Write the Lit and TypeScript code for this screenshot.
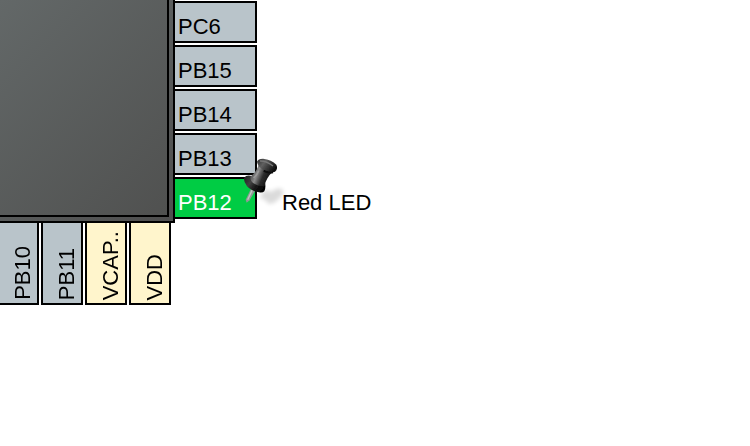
import { LitElement, html, css, svg } from "lit";
import { customElement } from "lit/decorators.js";
import { classMap } from "lit/directives/class-map.js";

type Kind = "io" | "power" | "active";

interface Pin {
  name: string;
  kind: Kind;
  label?: string;
}

const RIGHT_PINS: Pin[] = [
  { name: "PC6", kind: "io" },
  { name: "PB15", kind: "io" },
  { name: "PB14", kind: "io" },
  { name: "PB13", kind: "io" },
  { name: "PB12", kind: "active", label: "Red LED" },
];

const BOTTOM_PINS: Pin[] = [
  { name: "PB10", kind: "io" },
  { name: "PB11", kind: "io" },
  { name: "VCAP..", kind: "power" },
  { name: "VDD", kind: "power" },
];

@customElement("push-pin")
export class PushPin extends LitElement {
  static styles = css`
    :host {
      display: block;
      pointer-events: none;
    }
    svg {
      display: block;
      width: 50px;
      height: 60px;
      overflow: visible;
    }
  `;

  render() {
    return html`${svg`
      <svg viewBox="0 0 150 180" aria-hidden="true">
        <defs>
          <linearGradient id="cap" x1="0" y1="0" x2="1" y2="0.5">
            <stop offset="0" stop-color="#2a2a2a" />
            <stop offset="0.4" stop-color="#606060" />
            <stop offset="0.75" stop-color="#303030" />
            <stop offset="1" stop-color="#111" />
          </linearGradient>
          <linearGradient id="neck" x1="0" y1="0.2" x2="1" y2="0.6">
            <stop offset="0" stop-color="#333" />
            <stop offset="0.35" stop-color="#8a8a8a" />
            <stop offset="0.6" stop-color="#2c2c2c" />
            <stop offset="1" stop-color="#080808" />
          </linearGradient>
          <linearGradient id="collar" x1="0" y1="0" x2="1" y2="0.6">
            <stop offset="0" stop-color="#1c1c1c" />
            <stop offset="0.4" stop-color="#424242" />
            <stop offset="0.7" stop-color="#161616" />
            <stop offset="1" stop-color="#050505" />
          </linearGradient>
          <filter id="soft" x="-20%" y="-20%" width="140%" height="140%">
            <feGaussianBlur stdDeviation="2" />
          </filter>
          <filter id="haze" x="-30%" y="-30%" width="160%" height="160%">
            <feGaussianBlur stdDeviation="6" />
          </filter>
        </defs>
        <path d="M74 144 L86 122 Q98 118 110 126 Q124 110 142 118 Q150 132 134 144 Q116 164 100 161 Q94 148 74 144Z"
          fill="#000" opacity="0.14" filter="url(#haze)" />
        <g filter="url(#soft)">
          <path d="M49 114 L63 118 L44 151 L35 158 L32 149Z" fill="#8f9994" />
          <path d="M52 119 L38 149" stroke="#c0c8c3" stroke-width="4" />
          <path d="M27 84 Q34 74 50 78 L89 94 Q94 112 88 124 Q83 129 72 127 Q50 124 36 109 Q26 96 27 84Z" fill="url(#collar)" />
          <path d="M71 42 Q68 62 46 80 Q45 94 58 101 Q72 110 89 107 Q92 86 114 64Z" fill="url(#neck)" />
          <path d="M66 35 Q69 26 84 26 Q110 29 124 44 Q130 56 120 65 Q107 70 91 62 Q68 52 66 35Z" fill="url(#cap)" />
          <path d="M75 33 Q94 32 114 48" fill="none" stroke="#777" stroke-width="4" />
          <path d="M86 62 Q100 70 114 67" fill="none" stroke="#080808" stroke-width="5" />
          <path d="M71 62 Q67 73 56 84" fill="none" stroke="#999" stroke-width="5" />
        </g>
      </svg>
    `}`;
  }
}

@customElement("chip-pin")
export class ChipPin extends LitElement {
  static properties = {
    name: {},
    kind: {},
    vertical: { type: Boolean },
  };

  declare name: string;
  declare kind: Kind;
  declare vertical: boolean;

  static styles = css`
    :host {
      display: block;
      flex: none;
    }
    .pin {
      box-sizing: border-box;
      display: flex;
      align-items: flex-end;
      width: 82px;
      height: 42px;
      margin: 0;
      padding: 0 0 0 3px;
      border: 2px solid #000;
      border-left: 0;
      border-radius: 0;
      color: #000;
      font: 22px/28px "Liberation Sans", Arial, sans-serif;
      white-space: nowrap;
    }
    .vertical {
      justify-content: flex-end;
      width: 42px;
      height: 82px;
      padding: 0 0 3px;
      border: 2px solid #000;
      border-top: 0;
    }
    .vertical .text {
      writing-mode: vertical-rl;
      transform: rotate(180deg);
    }
    .io {
      background: #b9c4ca;
    }
    .power {
      background: #fff5cc;
    }
    .active {
      background: #00cc44;
      color: #fff;
    }
  `;

  render() {
    const classes = {
      pin: true,
      vertical: this.vertical,
      [this.kind]: true,
    };
    return html`<button class=${classMap(classes)}><span class="text">${this.name}</span></button>`;
  }
}

@customElement("app-root")
export class AppRoot extends LitElement {
  static styles = css`
    :host {
      display: block;
      min-height: 100vh;
      overflow: hidden;
      background: #fff;
      color: #000;
      font: 22px/28px "Liberation Sans", Arial, sans-serif;
    }
    .board {
      display: grid;
      grid-template-columns: 175px 1fr;
    }
    .chip {
      display: flex;
      padding: 0 4px 4px 0;
      border: solid #000;
      border-width: 0 2px 2px 0;
      background: linear-gradient(135deg, #646a6a, #4f4f4f);
    }
    .die {
      flex: 1;
      border: solid #000;
      border-width: 0 2px 2px 0;
      background: linear-gradient(135deg, #636868, #505150);
    }
    .right {
      display: flex;
      flex-direction: column;
      gap: 2px;
      padding: 1px 0 4px;
    }
    .row {
      position: relative;
      display: flex;
      align-items: flex-end;
      gap: 25px;
    }
    .label {
      padding-bottom: 2px;
    }
    .tack {
      position: absolute;
      left: 60px;
      top: -27px;
    }
    .bottom {
      display: flex;
      justify-content: flex-end;
      gap: 2px;
      padding-right: 4px;
    }
  `;

  render() {
    return html`
      <main class="board">
        <div class="chip"><div class="die"></div></div>
        <div class="right">
          ${RIGHT_PINS.map(
            (pin) => html`
              <div class="row">
                <chip-pin .name=${pin.name} .kind=${pin.kind}></chip-pin>
                ${pin.label
                  ? html`<span class="label">${pin.label}</span><push-pin class="tack"></push-pin>`
                  : ""}
              </div>
            `
          )}
        </div>
        <div class="bottom">
          ${BOTTOM_PINS.map(
            (pin) => html`<chip-pin .name=${pin.name} .kind=${pin.kind} .vertical=${true}></chip-pin>`
          )}
        </div>
      </main>
    `;
  }
}
